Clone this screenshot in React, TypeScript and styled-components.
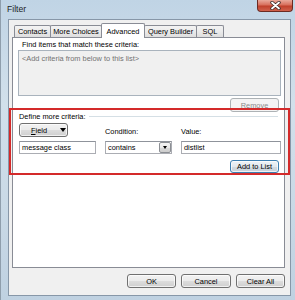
import React from "react";
import styled, { createGlobalStyle } from "styled-components";

const Global = createGlobalStyle`
  html, body { margin: 0; padding: 0; }
  body {
    font-family: "Liberation Sans", Arial, sans-serif;
    font-size: 7.4px;
    color: #000;
  }
  * { box-sizing: border-box; }
`;

const Window = styled.div`
  width: 295px;
  height: 300px;
  display: flex;
  flex-direction: column;
  padding: 0 4px 4px 7px;
  background: linear-gradient(180deg, #c0d4e5 0%, #d2e0eb 35%, #c9d9e6 70%, #bfd1e1 100%);
  border-left: 1px solid #8f9eac;
  overflow: hidden;
`;

const TitleBar = styled.div`
  height: 19px;
  flex: none;
  display: flex;
  align-items: flex-start;
  justify-content: space-between;
  margin-left: -1px;
`;

const Title = styled.span`
  font-size: 8.6px;
  padding-top: 4px;
  color: #1e1e1e;
`;

const CloseButton = styled.div`
  width: 36px;
  height: 12px;
  margin-right: -2px;
  border: 1px solid #6c2a22;
  border-top: none;
  border-radius: 0 0 4px 4px;
  background: linear-gradient(180deg, #e9a99b 0%, #d86f5c 45%, #c0402b 55%, #d0614c 100%);
  display: flex;
  align-items: center;
  justify-content: center;
`;

const Client = styled.div`
  flex: 1;
  display: flex;
  flex-direction: column;
  background: #f0f0f0;
  border: 1px solid #8797a8;
  padding: 3px 5px 7px 3px;
`;

const TabRow = styled.div`
  height: 14px;
  flex: none;
  display: flex;
  align-items: flex-end;
  padding-left: 2px;
`;

const Tab = styled.div<{ $active?: boolean; $w: number }>`
  width: ${(p) => p.$w}px;
  height: ${(p) => (p.$active ? 15 : 12)}px;
  margin-left: -1px;
  margin-bottom: ${(p) => (p.$active ? -1 : 0)}px;
  position: relative;
  z-index: ${(p) => (p.$active ? 2 : 1)};
  border: 1px solid #898c95;
  border-bottom: none;
  border-radius: 2px 2px 0 0;
  background: ${(p) => (p.$active ? "#ffffff" : "linear-gradient(180deg, #f3f3f3 0%, #ebebeb 50%, #dedede 100%)")};
  display: flex;
  justify-content: center;
  align-items: ${(p) => (p.$active ? "flex-start" : "center")};
  padding-top: ${(p) => (p.$active ? 3 : 0)}px;
  white-space: nowrap;
  &:first-child { margin-left: 0; }
`;

const Panel = styled.div`
  flex: 1;
  display: flex;
  flex-direction: column;
  background: #fff;
  border: 1px solid #898c95;
  position: relative;
  z-index: 1;
`;

const Label = styled.div<{ $ml?: number }>`
  line-height: 9px;
  height: 9px;
  white-space: nowrap;
  margin-left: ${(p) => p.$ml ?? 0}px;
`;

const FindLabel = styled(Label)`
  margin-top: 2px;
  margin-bottom: 1px;
`;

const ListBox = styled.div`
  height: 46px;
  margin: 0 3px 0 5px;
  border: 1px solid #a9b3bd;
  background: #f0f0f0;
  color: #727272;
  padding: 3px 3px;
  line-height: 9px;
`;

const RemoveRow = styled.div`
  display: flex;
  justify-content: flex-end;
  margin: 2px 5px 0 0;
`;

const Button = styled.div<{ $w: number; $h?: number; $variant?: "disabled" | "default" }>`
  width: ${(p) => p.$w}px;
  height: ${(p) => p.$h ?? 14}px;
  border: 1px solid ${(p) => (p.$variant === "disabled" ? "#adb2b5" : p.$variant === "default" ? "#3c7fb1" : "#707070")};
  border-radius: 3px;
  background: ${(p) =>
    p.$variant === "disabled"
      ? "#f4f4f4"
      : p.$variant === "default"
      ? "linear-gradient(180deg, #eef3f7 0%, #e3e9ee 50%, #d3dbe2 51%, #c8d1d9 100%)"
      : "linear-gradient(180deg, #f2f2f2 0%, #ebebeb 50%, #dddddd 51%, #cfcfcf 100%)"};
  color: ${(p) => (p.$variant === "disabled" ? "#8a8a8a" : "#000")};
  box-shadow: inset 0 0 0 1px ${(p) => (p.$variant === "disabled" ? "transparent" : "rgba(255,255,255,0.7)")};
  display: flex;
  align-items: center;
  justify-content: center;
  white-space: nowrap;
  flex: none;
`;

const Group = styled.div`
  position: relative;
  padding: 0 6px 3px 6px;
`;

const Highlight = styled.div`
  position: absolute;
  top: -4px;
  bottom: -2px;
  left: -4px;
  right: -6px;
  border: 2px solid #d42a2a;
  pointer-events: none;
`;

const GroupTitle = styled.div`
  display: flex;
  align-items: center;
  height: 9px;
  gap: 3px;
  margin-right: 0px;
`;

const EtchedLine = styled.div`
  flex: 1;
  height: 2px;
  border-top: 1px solid #d5dfe5;
  border-bottom: 1px solid #ffffff;
  margin-right: 0px;
`;

const CriteriaGrid = styled.div`
  display: grid;
  grid-template-columns: 77px 67px 100px;
  column-gap: 9px;
  grid-template-rows: 14px 13px 12px;
  row-gap: 4px;
  margin-top: 2px;
  & > :nth-child(7) { margin-top: 2px; }
`;

const FieldButton = styled(Button)`
  justify-content: flex-start;
  padding-left: 11px;
  gap: 13px;
  justify-self: start;
`;

const Triangle = styled.span`
  width: 0;
  height: 0;
  border-left: 3px solid transparent;
  border-right: 3px solid transparent;
  border-top: 4px solid #000;
`;

const GridLabel = styled(Label)`
  align-self: end;
  margin-bottom: 1px;
`;

const TextInput = styled.div<{ $w: number }>`
  width: ${(p) => p.$w}px;
  height: 13px;
  border: 1px solid #abadb3;
  border-top-color: #8f939b;
  background: #fff;
  padding-left: 2px;
  display: flex;
  align-items: center;
  white-space: nowrap;
`;

const Combo = styled(TextInput)`
  justify-content: space-between;
  padding-right: 0;
`;

const ComboArrow = styled.div`
  width: 12px;
  height: 11px;
  border: 1px solid #8c8f94;
  border-radius: 2px;
  background: linear-gradient(180deg, #f4f4f4 0%, #e9e9e9 50%, #d9d9d9 51%, #cdcdcd 100%);
  display: flex;
  align-items: center;
  justify-content: center;
`;

const SmallTriangle = styled.span`
  width: 0;
  height: 0;
  border-left: 2.5px solid transparent;
  border-right: 2.5px solid transparent;
  border-top: 3px solid #000;
`;

const AddCell = styled.div`
  grid-column: 3;
  display: flex;
  justify-content: flex-end;
  padding-right: 2px;
`;

const Spacer = styled.div`
  flex: 1;
`;

const ButtonRow = styled.div`
  display: flex;
  justify-content: flex-end;
  gap: 5px;
  margin-top: 6px;
  flex: none;
`;

const Underlined = styled.span`
  text-decoration: underline;
`;

export default function App() {
  return (
    <>
      <Global />
      <Window>
        <TitleBar>
          <Title>Filter</Title>
          <CloseButton>
            <svg width="11" height="9" viewBox="0 0 11 9">
              <path d="M2 1.5 L9 7.5 M9 1.5 L2 7.5" stroke="#3a2a28" strokeWidth="3.4" strokeLinecap="round" />
              <path d="M2 1.5 L9 7.5 M9 1.5 L2 7.5" stroke="#ffffff" strokeWidth="1.8" strokeLinecap="round" />
            </svg>
          </CloseButton>
        </TitleBar>
        <Client>
          <TabRow>
            <Tab $w={37}>Contacts</Tab>
            <Tab $w={52}>More Choices</Tab>
            <Tab $w={44} $active>Advanced</Tab>
            <Tab $w={53}>Query Builder</Tab>
            <Tab $w={28}>SQL</Tab>
          </TabRow>
          <Panel>
            <FindLabel $ml={9}>Find items that match these criteria:</FindLabel>
            <ListBox>&lt;Add criteria from below to this list&gt;</ListBox>
            <RemoveRow>
              <Button $w={49} $variant="disabled">Remove</Button>
            </RemoveRow>
            <Group>
              <Highlight />
              <GroupTitle>
                <Label>Define more criteria:</Label>
                <EtchedLine />
              </GroupTitle>
              <CriteriaGrid>
                <FieldButton $w={49}>
                  <span>
                    <Underlined>F</Underlined>ield
                  </span>
                  <Triangle />
                </FieldButton>
                <GridLabel>Condition:</GridLabel>
                <GridLabel>Value:</GridLabel>
                <TextInput $w={77}>message class</TextInput>
                <Combo $w={67}>
                  <span>contains</span>
                  <ComboArrow>
                    <SmallTriangle />
                  </ComboArrow>
                </Combo>
                <TextInput $w={100}>distlist</TextInput>
                <AddCell>
                  <Button $w={49} $h={13} $variant="default">Add to List</Button>
                </AddCell>
              </CriteriaGrid>
            </Group>
            <Spacer />
          </Panel>
          <ButtonRow>
            <Button $w={49}>OK</Button>
            <Button $w={50}>Cancel</Button>
            <Button $w={49}>Clear All</Button>
          </ButtonRow>
        </Client>
      </Window>
    </>
  );
}
